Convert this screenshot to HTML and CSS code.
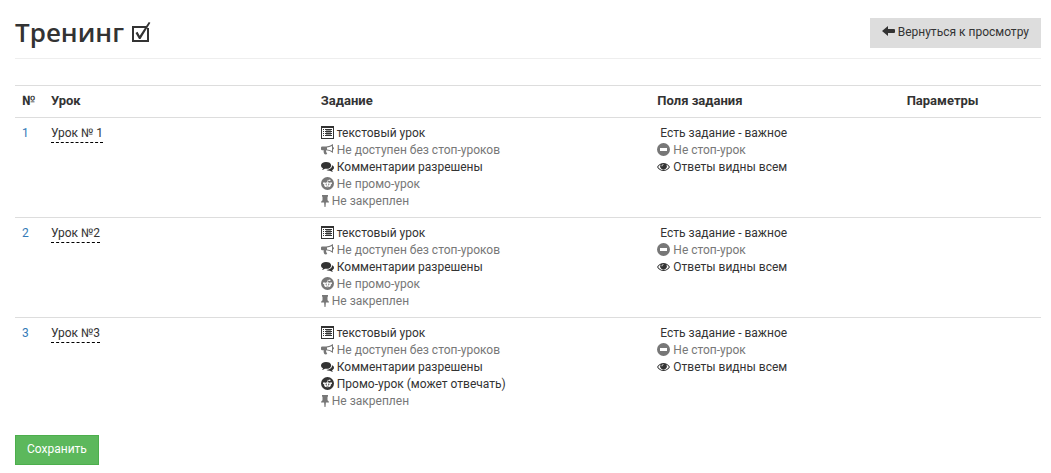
FILE: index.html
```html
<!DOCTYPE html>
<html lang="ru">
<head>
<meta charset="utf-8">
<title>Тренинг</title>
<link rel="stylesheet" href="styles.css">
</head>
<body>
<svg class="sprite" aria-hidden="true">
  <symbol id="list" viewBox="0 0 13 13"><path fill-rule="evenodd" d="M0 0h13v13H0zM1 2v10h11V2z"/><path d="M2 3h1v1H2zM2 5h1v1H2zM2 7h1v1H2zM2 9h1v1H2zM4 3h7v1H4zM4 5h7v1H4zM4 7h7v1H4zM4 9h7v1H4z"/><path d="M5 4h5v5H5z" opacity=".5"/></symbol>
  <symbol id="horn" viewBox="0 0 13 13"><path fill-rule="evenodd" d="M12 1v3q1 .2 1 1.200T12 6.500V10Q9 7.500 5.300 7.300q-.7 1 .2 1.900-.2.700.8 1.600-1.200 1-3 .3Q2.200 9 2.700 7.300H1.200Q0 7.200 0 6.200V4.500q0-1 1.200-1.100h4Q9 3.300 12 1zM11 2.900Q8.500 4.300 6 4.400v2.100q2.500.2 5 1.600z"/></symbol>
  <symbol id="comments" viewBox="0 0 13 13"><path d="M5 2C2.200 2 0 3.500 0 5.400c0 1.200.8 2.200 2 2.900-.2.600-.6 1.200-1.100 1.600 1.200-.1 2.200-.5 3-1.100 3.900.4 6.300-1.200 6.300-3.400S7.900 2 5 2z"/><path d="M11.100 5.300c-.1 2.800-2.400 4.500-5.700 4.600.8.600 2 .9 3.500.8.900.6 1.900 1 3.200 1.100-.5-.5-.9-1-1.100-1.600 1.300-.7 2-1.500 2-2.500 0-1-.7-1.900-1.900-2.400z"/></symbol>
  <symbol id="reddit" viewBox="0 0 13 13"><circle cx="6.500" cy="6.500" r="6.500"/><g class="cut"><ellipse cx="6.500" cy="7.700" rx="3.400" ry="2.500"/><circle cx="3" cy="6.300" r="1"/><circle cx="10" cy="6.300" r="1"/><circle cx="8.800" cy="3.200" r=".8"/><path d="M6.200 5.500l.6-2.700 2 .4v.6l-1.500-.3-.5 2z"/></g><circle cx="5.200" cy="7.200" r=".7"/><circle cx="7.800" cy="7.200" r=".7"/><path d="M5 8.600q1.500.8 3 0v.4q-1.500 1-3 0z"/></symbol>
  <symbol id="pin" viewBox="0 0 8 13"><path d="M1 1h6v1.500l-.5.300v3.500Q8 7 8 8.600H4.900L4.500 13h-1l-.4-4.400H0Q0 7 1.500 6.300V2.800L1 2.500z"/></symbol>
  <symbol id="minus" viewBox="0 0 13 13"><circle cx="6.500" cy="6.500" r="6.500"/><path class="cut" d="M3 5h7v3H3z"/></symbol>
  <symbol id="eye" viewBox="0 0 13 13"><path fill-rule="evenodd" d="M0 7C1.700 4.300 4 3 6.500 3S11.300 4.300 13 7c-1.700 2.700-4 4-6.500 4S1.700 9.700 0 7zM1.100 7c1.200 1.900 3.200 3.100 5.400 3.100S10.700 8.900 11.900 7c-.7-1.100-1.600-1.900-2.700-2.500a3.300 3.300 0 1 1-5.400 0C2.700 5.100 1.800 5.900 1.100 7z"/><path class="cut" d="M4.500 6.300c0-1.200.8-2 2-2v.8c-.7 0-1.200.5-1.200 1.200z"/></symbol>
  <symbol id="back" viewBox="0 0 13 13"><path d="M0 6l6-5v3h6q1 0 1 1v2q0 1-1 1H6v3z"/></symbol>
  <symbol id="check" viewBox="0 0 20 22"><path fill="none" stroke="currentColor" stroke-width="2" d="M16 6H2v14h15V7"/><path d="M4.500 12l2-1.200 2.200 4L17.800 1l1.600.8L9.500 18H8z"/></symbol>
</svg>

<header class="page-head">
  <h1>Тренинг <svg class="check"><use href="#check"/></svg></h1>
  <a class="back" href="#"><svg class="icon"><use href="#back"/></svg> Вернуться к просмотру</a>
</header>

<table class="lessons">
  <colgroup><col class="c-num"><col class="c-lesson"><col class="c-task"><col class="c-fields"><col></colgroup>
  <thead>
    <tr><th>№</th><th>Урок</th><th>Задание</th><th>Поля задания</th><th>Параметры</th></tr>
  </thead>
  <tbody>
    <tr>
      <td><a class="num" href="#">1</a></td>
      <td><a class="lesson" href="#">Урок № 1</a></td>
      <td>
        <div><svg class="icon"><use href="#list"/></svg> текстовый урок</div>
        <div class="off"><svg class="icon"><use href="#horn"/></svg> Не доступен без стоп-уроков</div>
        <div><svg class="icon"><use href="#comments"/></svg> Комментарии разрешены</div>
        <div class="off"><svg class="icon"><use href="#reddit"/></svg> Не промо-урок</div>
        <div class="off"><svg class="icon narrow"><use href="#pin"/></svg> Не закреплен</div>
      </td>
      <td>
        <div>&nbsp;Есть задание - важное</div>
        <div class="off"><svg class="icon"><use href="#minus"/></svg> Не стоп-урок</div>
        <div><svg class="icon"><use href="#eye"/></svg> Ответы видны всем</div>
      </td>
      <td></td>
    </tr>
    <tr>
      <td><a class="num" href="#">2</a></td>
      <td><a class="lesson" href="#">Урок №2</a></td>
      <td>
        <div><svg class="icon"><use href="#list"/></svg> текстовый урок</div>
        <div class="off"><svg class="icon"><use href="#horn"/></svg> Не доступен без стоп-уроков</div>
        <div><svg class="icon"><use href="#comments"/></svg> Комментарии разрешены</div>
        <div class="off"><svg class="icon"><use href="#reddit"/></svg> Не промо-урок</div>
        <div class="off"><svg class="icon narrow"><use href="#pin"/></svg> Не закреплен</div>
      </td>
      <td>
        <div>&nbsp;Есть задание - важное</div>
        <div class="off"><svg class="icon"><use href="#minus"/></svg> Не стоп-урок</div>
        <div><svg class="icon"><use href="#eye"/></svg> Ответы видны всем</div>
      </td>
      <td></td>
    </tr>
    <tr>
      <td><a class="num" href="#">3</a></td>
      <td><a class="lesson" href="#">Урок №3</a></td>
      <td>
        <div><svg class="icon"><use href="#list"/></svg> текстовый урок</div>
        <div class="off"><svg class="icon"><use href="#horn"/></svg> Не доступен без стоп-уроков</div>
        <div><svg class="icon"><use href="#comments"/></svg> Комментарии разрешены</div>
        <div><svg class="icon"><use href="#reddit"/></svg> Промо-урок (может отвечать)</div>
        <div class="off"><svg class="icon narrow"><use href="#pin"/></svg> Не закреплен</div>
      </td>
      <td>
        <div>&nbsp;Есть задание - важное</div>
        <div class="off"><svg class="icon"><use href="#minus"/></svg> Не стоп-урок</div>
        <div><svg class="icon"><use href="#eye"/></svg> Ответы видны всем</div>
      </td>
      <td></td>
    </tr>
  </tbody>
</table>

<button class="save" type="button">Сохранить</button>
</body>
</html>
```
FILE: styles.css
```css
* { box-sizing: border-box; }
body {
  margin: 0;
  padding: 18px 10px 8px 15px;
  background: #fff;
  color: #333;
  font: 12px/17px Roboto, "Liberation Sans", sans-serif;
}
.sprite { display: none; }
.icon {
  width: 13px;
  height: 13px;
  fill: currentColor;
  vertical-align: -2px;
}
.narrow { width: 8px; }
.cut { fill: #fff; }

.page-head {
  display: flex;
  justify-content: space-between;
  align-items: flex-start;
  padding-bottom: 10px;
  border-bottom: 1px solid #eee;
  margin-bottom: 26px;
}
h1 {
  margin: 0;
  font: 600 26px/28px "Open Sans", Roboto, sans-serif;
}
.check {
  width: 20px;
  height: 22px;
  fill: currentColor;
  vertical-align: -1px;
}
.back {
  padding: 6px 12px 7px;
  background: #ddd;
  color: #333;
  text-decoration: none;
}

.lessons {
  width: 100%;
  table-layout: fixed;
  border-collapse: separate;
  border-spacing: 0;
}
.c-num { width: 29px; }
.c-lesson { width: 26.3%; }
.c-task { width: 32.8%; }
.c-fields { width: 24.3%; }
th, td {
  padding: 7px;
  border-top: 1px solid #ddd;
  text-align: left;
  vertical-align: top;
}
th {
  padding: 6px 7px 8px;
  font-size: 13px;
  font-weight: 700;
}
.off { color: #777; }
.num { color: #337ab7; text-decoration: none; }
.lesson {
  display: inline-block;
  border-bottom: 1px dashed #000;
  color: #333;
  text-decoration: none;
}

.save {
  display: block;
  margin-top: 18px;
  padding: 5px 11px 6px;
  border: 1px solid #4cae4c;
  background: #5cb85c;
  color: #fff;
  font: inherit;
}
```
